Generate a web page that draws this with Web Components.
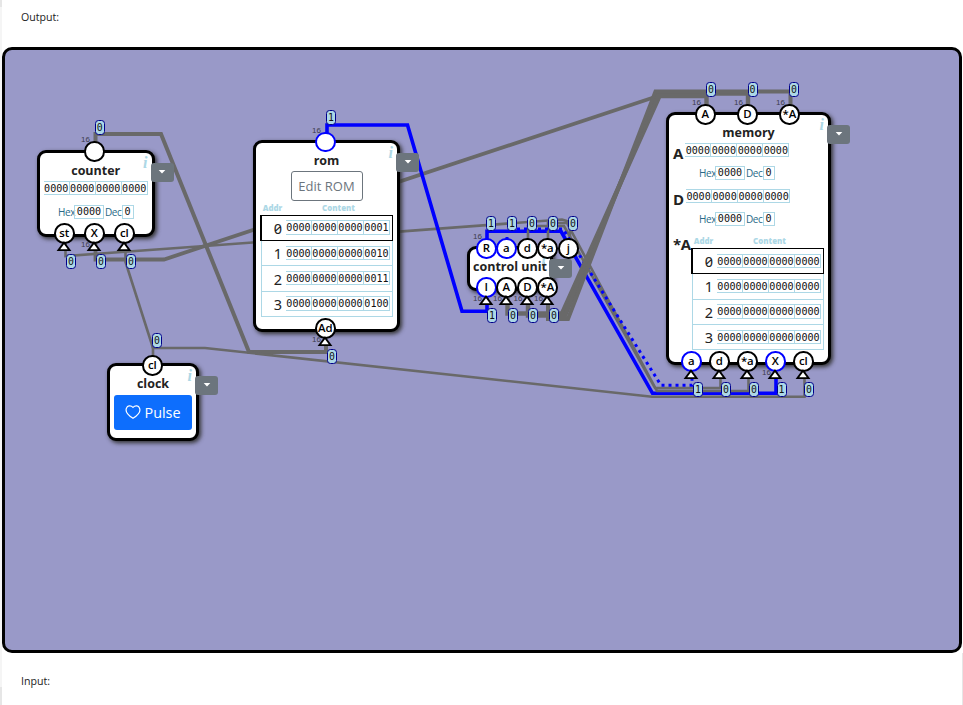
<!DOCTYPE html>
<html lang="en"><head><meta charset="utf-8"><title>Circuit simulator</title>
<style>html,body{margin:0;height:100%;overflow:hidden;background:#fff}</style></head>
<body><circuit-page></circuit-page>
<script>
const define = (name, html, setup) => customElements.define(name, class extends HTMLElement {
  connectedCallback() {
    if (this.shadowRoot) return;
    this.attachShadow({mode:'open'}).innerHTML = typeof html === 'function' ? html(this) : html;
    if (setup) setup(this);
  }
});
const place = el => { el.style.left = el.getAttribute('x') + 'px'; el.style.top = el.getAttribute('y') + 'px'; };

/* Four nibbles in joined cells */
define('bit-word', el => `<style>:host{display:inline-flex;height:14.4px;box-sizing:border-box;flex:none;
 font:10.1px/13px "DejaVu Sans Mono",monospace;color:#111}
 span{box-sizing:border-box;width:26px;border:1px solid lightblue;border-left-width:0;text-align:center;display:flex;justify-content:center}
 span:first-child{border-left-width:1px}</style>${el.getAttribute('value').match(/.{4}/g).map(n=>`<span>${n}</span>`).join('')}`);

define('radix-view', `<style>:host{display:flex;height:14px;align-items:center;font:10px/14px "Open Sans",sans-serif;color:#2a6a88}
 b{box-sizing:border-box;height:14.4px;border:1px solid lightblue;font:10.1px/12.5px "DejaVu Sans Mono",monospace;color:#111;text-align:center}
 .h{width:30px;margin:0}.d{width:12px;margin-left:1px}i{font-style:normal;width:16px;letter-spacing:-.4px;white-space:nowrap}i+b+i{width:15.5px;margin-left:1px}</style>
 <i>Hex</i><b class="h">0000</b><i>Dec</i><b class="d">0</b>`);

define('memory-table', el => `<style>:host{display:block;width:133px;font-family:"Noto Sans",sans-serif}
 .head{display:grid;grid-template-columns:25px 1fr;text-align:center;font:800 7.9px/13px "Open Sans",sans-serif;color:lightblue;padding-right:1px}
 .row{box-sizing:border-box;display:flex;align-items:center;justify-content:flex-end;height:25.4px;margin:0 0 0 1px;padding:0 2px 1px 0;border:1px solid lightblue;border-top:0;gap:4px}
 .row.sel{height:26px;margin:0;border:1px solid #000;border-left-width:2px;padding-right:2px}
 .n{font-size:14.5px;line-height:20px;font-feature-settings:"zero";color:#222;padding-top:1px}</style>
 <div class="head"><span>Addr</span><span>Content</span></div>
 ${el.getAttribute('values').split(' ').map((v,i)=>`<div class="row ${i?'':'sel'}"><span class="n">${i}</span><bit-word value="${v}"></bit-word></div>`).join('')}`);

define('circuit-node', el => `<style>:host{position:absolute;box-sizing:border-box;border:3px solid #000;border-radius:9px;background:#fff;
 box-shadow:2px 2px 4px #333;display:flex;flex-direction:column;align-items:center;font-family:"Open Sans",sans-serif;color:#222}
 h2{margin:0;font-size:12.5px;line-height:18px;font-weight:700;white-space:nowrap;padding-top:8.5px}
 .info{position:absolute;right:4px;top:1px;font:italic bold 16px/18px "Liberation Serif",serif;color:lightblue}
 button{position:absolute;left:100%;top:9.6px;margin-left:-1px;width:23px;height:19px;border:0;border-radius:3px;background:#6c757d;padding:0;display:grid;place-items:center}</style>
 <span class="info">i</span><h2>${el.getAttribute('name')}</h2><slot></slot>
 <button><svg width="8" height="4"><path d="M.7 0h6.6L4 3.6z" fill="#fff"/></svg></button>`,
 el => { place(el); el.style.width = el.getAttribute('w')+'px'; el.style.height = el.getAttribute('h')+'px'; });

define('pin-port', `<style>:host{position:absolute;box-sizing:border-box;width:20.4px;height:20.4px;margin:-10.2px 0 0 -10.2px;border:2px solid #000;border-radius:50%;background:#fff;
 display:flex;align-items:center;justify-content:center;font:600 11.4px/16px "Open Sans",sans-serif;color:#000;white-space:nowrap}
 :host([on]){border-color:#00f}
 svg{display:none;position:absolute;left:1px;top:15.6px;overflow:visible}:host([in]) svg{display:block}</style>
 <slot></slot><svg width="14" height="10"><path d="M7 1.6L12.6 9.2H1.4z" fill="#fff" stroke="#000" stroke-width="1.8"/></svg>`, place);

define('signal-tag', `<style>:host{position:absolute;box-sizing:border-box;width:10px;height:15px;margin:-7.5px 0 0 -5px;border:1px solid #00008b;border-radius:3.5px;background:lightblue;
 font:9.8px/13px "DejaVu Sans Mono",monospace;color:#111;display:flex;justify-content:center}</style><slot></slot>`, place);
define('bus-width', `<style>:host{position:absolute;width:12px;margin:-6px 0 0 -6px;text-align:center;font:8px/12px "Liberation Sans",sans-serif;color:#3c3c4c}</style>16`, place);

define('wire-layer', `<style>:host{position:absolute;inset:0}svg{display:block}</style>
<svg width="963" height="705" fill="none" stroke="#696969" stroke-width="2.6">
 <path d="M95.5 150V134H161L249 352H326V340" stroke-width="4"/>
 <path d="M95.5 240V259.5H164L655 97" stroke-width="3.8"/>
 <path d="M65.5 240V256L205 246L562 219.5L570 222V240"/>
 <path d="M125.5 240V262L153 348"/><path d="M153 365V348H205L652 396.7H804.5V372"/>
 <g stroke="#00f"><path d="M327 141V125H407.5L462 311.3H487V298" stroke-width="3.6"/>
 <path d="M487 248V231.3H561L652.5 393.3H776V372" stroke-width="3.6"/></g>
 <path d="M528 244V226H564L655 388H720.5V372M548 244V223H567L657 391H748.5V372"/>
 <path d="M507 240V229H563L661 385.3H692V376" stroke="#00f" stroke-width="3" stroke-dasharray="3 4"/>
 <path d="M507.5 298V313.5H562L659.5 96H706.5V110" stroke-width="4.4"/>
 <path d="M528 298V315.5H565L658 93.5H748V110" stroke-width="4.4"/>
 <path d="M548 298V319H568L655.5 91.5H790.5V110" stroke-width="4"/>
</svg>`);

define('circuit-board', `<style>
 :host{display:block;flex:none;box-sizing:border-box;height:606px;margin:0 1px 0 2px;border:3px solid #000;border-radius:10px;background:#9999c8}
 .plane{position:absolute;left:0;top:0;width:963px;height:705px}
 .word{margin-top:1.5px}.radix{margin-top:9.5px}
 .edit{box-sizing:border-box;width:72px;height:30px;border:1px solid #6c757d;border-radius:3px;background:#fff;color:#6c757d;font:13px/28px "Open Sans",sans-serif;padding:0;white-space:nowrap}
 .pulse{width:78px;height:35px;border:0;border-radius:3px;background:#0d6efd;color:#fff;font:14.4px/35px "Open Sans",sans-serif;padding:0;display:flex;align-items:center;justify-content:center;gap:3px;margin-top:2px}
 .reg{align-self:stretch;display:grid;grid-template-columns:auto 1fr;grid-template-rows:23px 14px;align-content:start;column-gap:2px;height:46px;padding-left:4px}
 .reg strong,.cells strong{font-size:15px;line-height:20px}.reg strong{margin-top:0}.reg radix-view{grid-column:1/3;margin:0 0 0 26px}
 .cells{align-self:stretch;display:flex;padding-left:4px}.cells strong{width:18px;margin-top:-1px;letter-spacing:-.4px}.cells memory-table{flex:none}
</style>
<div class="plane"><wire-layer></wire-layer>
 <circuit-node name="counter" x="37" y="150" w="117.5" h="87"><bit-word class="word" value="0000000000000000"></bit-word><radix-view class="radix"></radix-view></circuit-node>
 <circuit-node name="rom" x="253" y="140" w="147" h="192"><button class="edit" style="margin-top:1.5px">Edit ROM</button><memory-table style="margin-top:1px" values="0000000000000001 0000000000000010 0000000000000011 0000000000000100"></memory-table></circuit-node>
 <circuit-node name="control unit" x="467" y="246" w="86" h="45"></circuit-node>
 <circuit-node name="memory" x="666" y="112" w="165" h="253"><div class="reg" style="margin-top:1.4px"><strong>A</strong><bit-word value="0000000000000000"></bit-word><radix-view></radix-view></div>
  <div class="reg"><strong>D</strong><bit-word value="0000000000000000"></bit-word><radix-view></radix-view></div>
  <div class="cells"><strong>*A</strong><memory-table style="margin-top:.4px" values="0000000000000000 0000000000000000 0000000000000000 0000000000000000"></memory-table></div></circuit-node>
 <circuit-node name="clock" x="107" y="363" w="92" h="78"><button class="pulse"><svg width="16" height="16" viewBox="0 0 16 16"><path d="M8 14.3C-4.5 7 3-1.8 8 3.4 13-1.8 20.5 7 8 14.3z" fill="none" stroke="#fff" stroke-width="1.2"/></svg>Pulse</button></circuit-node>
 <bus-width x="85.5" y="139.5"></bus-width><bus-width x="85.5" y="244.5"></bus-width><bus-width x="316.5" y="130.5"></bus-width><bus-width x="316.5" y="339.5"></bus-width>
 <bus-width x="477.5" y="237"></bus-width><bus-width x="477.5" y="299"></bus-width><bus-width x="497.5" y="299"></bus-width><bus-width x="518" y="299"></bus-width><bus-width x="538.5" y="299"></bus-width>
 <bus-width x="696.5" y="102.5"></bus-width><bus-width x="738.5" y="102.5"></bus-width><bus-width x="780.5" y="102.5"></bus-width><bus-width x="766.5" y="372.5"></bus-width>
 <pin-port x="94.3" y="151.3"></pin-port><pin-port in x="64.3" y="233.3">st</pin-port><pin-port in x="94.3" y="233.3">X</pin-port><pin-port in x="124.3" y="233.3">cl</pin-port>
 <pin-port on x="325.3" y="142"></pin-port><pin-port in x="325.3" y="328.3">Ad</pin-port><pin-port x="152.3" y="365.3">cl</pin-port>
 <pin-port on x="486.3" y="248.3">R</pin-port><pin-port on x="506.3" y="248.3">a</pin-port><pin-port x="527.3" y="248.3">d</pin-port><pin-port x="547.3" y="248.3">*a</pin-port><pin-port x="568.3" y="248.3">j</pin-port>
 <pin-port in on x="486.3" y="287.3">I</pin-port><pin-port in x="506.3" y="287.3">A</pin-port><pin-port in x="527.3" y="287.3">D</pin-port><pin-port in x="547.3" y="287.3">*A</pin-port>
 <pin-port x="705.3" y="114.3">A</pin-port><pin-port x="747.3" y="114.3">D</pin-port><pin-port x="789.3" y="114.3">*A</pin-port>
 <pin-port in on x="691.3" y="361.3">a</pin-port><pin-port in x="719.3" y="361.3">d</pin-port><pin-port in x="747.3" y="361.3">*a</pin-port><pin-port in on x="775.3" y="361.3">X</pin-port><pin-port in x="803.3" y="361.3">cl</pin-port>
 <signal-tag x="99.8" y="127.5">0</signal-tag><signal-tag x="71" y="261.5">0</signal-tag><signal-tag x="101" y="261.5">0</signal-tag><signal-tag x="131" y="261.5">0</signal-tag>
 <signal-tag x="331" y="117.5">1</signal-tag><signal-tag x="332" y="356.5">0</signal-tag><signal-tag x="157" y="340.5">0</signal-tag>
 <signal-tag x="491" y="223.5">1</signal-tag><signal-tag x="512" y="223.5">1</signal-tag><signal-tag x="532" y="223.5">0</signal-tag><signal-tag x="553" y="223.5">0</signal-tag><signal-tag x="573" y="223.5">0</signal-tag>
 <signal-tag x="492" y="315.5">1</signal-tag><signal-tag x="513" y="315.5">0</signal-tag><signal-tag x="533" y="315.5">0</signal-tag><signal-tag x="554" y="315.5">0</signal-tag>
 <signal-tag x="711" y="89.5">0</signal-tag><signal-tag x="752.5" y="89.5">0</signal-tag><signal-tag x="794" y="89.5">0</signal-tag>
 <signal-tag x="698" y="389.5">1</signal-tag><signal-tag x="726" y="389.5">0</signal-tag><signal-tag x="754" y="389.5">0</signal-tag><signal-tag x="781.5" y="389.5">1</signal-tag><signal-tag x="809" y="389.5">0</signal-tag>
</div>`);

define('circuit-page', `<style>:host{display:flex;flex-direction:column;position:relative;width:963px;height:705px;overflow:hidden;font:10.6px/15px "Open Sans",sans-serif;color:#222;
 background:linear-gradient(#e6e6e6,#e6e6e6) 962px 653px/1px 52px no-repeat,linear-gradient(#e6e6e6 7px,#f5f5f5 7px 687px,#e6e6e6 687px) 0 0/2px 705px no-repeat,#fff}
 p{margin:0;padding:10px 0 0 21px;box-sizing:border-box}.top{height:47px}.bottom{padding-top:21px}</style>
 <p class="top">Output:</p><circuit-board></circuit-board><p class="bottom">Input:</p>`);
</script></body></html>
